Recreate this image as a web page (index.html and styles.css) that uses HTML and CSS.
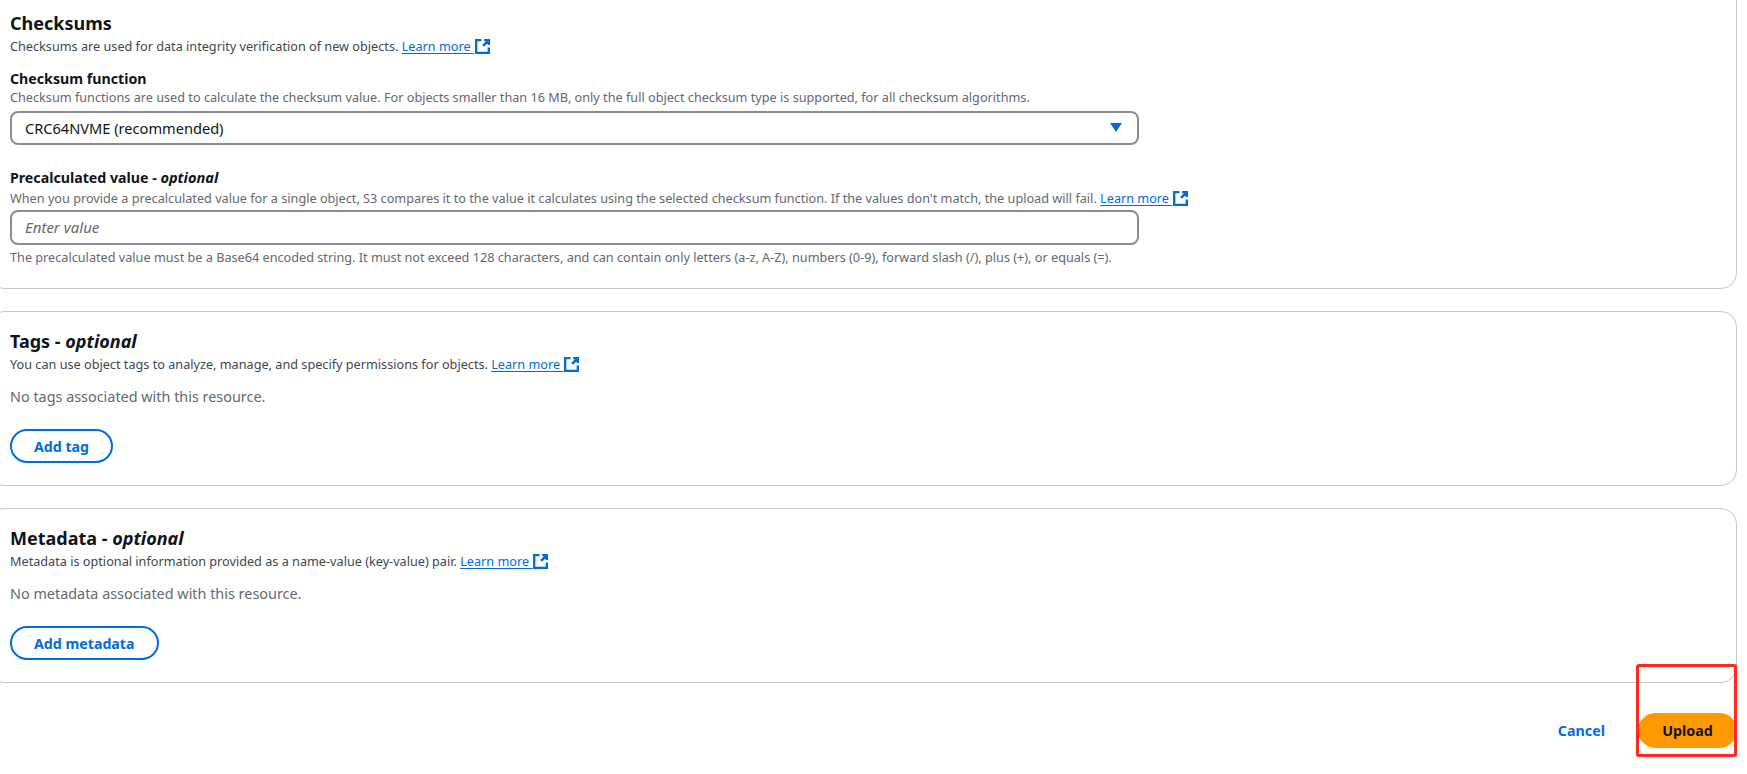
FILE: index.html
```html
<!DOCTYPE html>
<html lang="en">
<head>
<meta charset="utf-8">
<title>Upload</title>
<link rel="stylesheet" href="styles.css">
</head>
<body>
<main class="page">
  <section class="card card-first">
    <h2 class="title">Checksums</h2>
    <p class="desc">Checksums are used for data integrity verification of new objects. <a class="link" href="#">Learn more </a><svg class="ext" viewBox="0 0 14 14"><path d="M6 1H1v12h12V8M8.500 1H13v4.500M12.500 1.500 7.500 6.500"/></svg></p>
    <div class="field field-function">
      <div class="label">Checksum function</div>
      <p class="desc">Checksum functions are used to calculate the checksum value. For objects smaller than 16 MB, only the full object checksum type is supported, for all checksum algorithms.</p>
      <div class="control select">
        <span>CRC64NVME (recommended)</span>
        <svg class="caret" viewBox="0 0 12 9"><path d="M0 0h12L6 9z"/></svg>
      </div>
    </div>
    <div class="field field-value">
      <div class="label">Precalculated value - <em>optional</em></div>
      <p class="desc desc-gap">When you provide a precalculated value for a single object, S3 compares it to the value it calculates using the selected checksum function. If the values don't match, the upload will fail. <a class="link" href="#">Learn more </a><svg class="ext" viewBox="0 0 14 14"><path d="M6 1H1v12h12V8M8.500 1H13v4.500M12.500 1.500 7.500 6.500"/></svg></p>
      <div class="control input">Enter value</div>
      <p class="desc hint">The precalculated value must be a Base64 encoded string. It must not exceed 128 characters, and can contain only letters (a-z, A-Z), numbers (0-9), forward slash (/), plus (+), or equals (=).</p>
    </div>
  </section>
  <section class="card">
    <h2 class="title">Tags - <em>optional</em></h2>
    <p class="desc">You can use object tags to analyze, manage, and specify permissions for objects. <a class="link" href="#">Learn more </a><svg class="ext" viewBox="0 0 14 14"><path d="M6 1H1v12h12V8M8.500 1H13v4.500M12.500 1.500 7.500 6.500"/></svg></p>
    <p class="empty">No tags associated with this resource.</p>
    <button class="btn">Add tag</button>
  </section>
  <section class="card">
    <h2 class="title">Metadata - <em>optional</em></h2>
    <p class="desc">Metadata is optional information provided as a name-value (key-value) pair. <a class="link" href="#">Learn more </a><svg class="ext" viewBox="0 0 14 14"><path d="M6 1H1v12h12V8M8.500 1H13v4.500M12.500 1.500 7.500 6.500"/></svg></p>
    <p class="empty">No metadata associated with this resource.</p>
    <button class="btn">Add metadata</button>
  </section>
  <footer class="actions">
    <button class="cancel">Cancel</button>
    <button class="upload">Upload</button>
  </footer>
</main>
<div class="annotation"></div>
</body>
</html>
```
FILE: styles.css
```css
* { box-sizing: border-box; }
html, body { margin: 0; height: 774px; overflow: hidden; background: #fff; }
body { position: relative; font-family: "Noto Sans", "Open Sans", sans-serif; color: #0f141a; }
.page { width: 1737px; display: flex; flex-direction: column; gap: 22px; }
.card {
  margin-left: -12px;
  height: 175px;
  padding: 17px 0 0 21px;
  border: 1px solid #c6c6cd;
  border-radius: 16px;
}
.card-first { margin-top: -20px; height: 309px; padding-top: 30px; }
.title { margin: 0; font-size: 18px; line-height: 24px; font-weight: 700; }
.title em { font-weight: 700; }
.desc { margin: 0; font-size: 12.680px; line-height: 16px; color: #424650; white-space: nowrap; }
.field .desc { color: #656871; }
.title + .desc { margin-top: 3px; }
.desc-gap { margin-top: 2px; }
.link { color: #006ce0; text-decoration: underline; text-underline-offset: 2px; }
.ext { width: 15px; height: 15px; margin-left: 1px; vertical-align: -3px; fill: none; stroke: #006ce0; stroke-width: 2.400; }
.field-function { margin-top: 15px; }
.field-value { margin-top: 22px; }
.label { font-size: 14.200px; line-height: 20px; font-weight: 700; }
.label em { font-weight: 700; font-size: 14.600px; }
.control {
  width: 1129px;
  height: 34px;
  margin-top: 6px;
  padding: 0 13px 1px;
  display: flex;
  align-items: center;
  justify-content: space-between;
  border: 2px solid #8c8c94;
  border-radius: 8px;
  font-size: 14.600px;
}
.input { height: 35px; margin-top: 4px; padding-bottom: 2px; color: #656871; font-style: italic; font-size: 15px; }
.hint { margin-top: 4px; }
.caret { width: 12px; height: 9px; margin-right: 2px; fill: #006ce0; }
.empty { margin: 15px 0 0; font-size: 14.400px; line-height: 20px; color: #656871; }
.btn {
  display: block;
  height: 34px;
  margin-top: 22px;
  padding: 0 22px;
  border: 2px solid #006ce0;
  border-radius: 20px;
  background: #fff;
  color: #006ce0;
  font: 700 14.200px "Noto Sans", "Open Sans", sans-serif;
}
.actions { margin-top: 8px; display: flex; justify-content: flex-end; align-items: center; gap: 33px; }
.cancel, .upload { border: 0; font: 700 14.300px "Noto Sans", "Open Sans", sans-serif; }
.cancel { padding: 0; background: none; color: #006ce0; }
.upload { width: 99px; height: 35px; border-radius: 20px; background: #ff9900; color: #0f141a; }
.annotation {
  position: absolute;
  left: 1636px;
  top: 664px;
  width: 101px;
  height: 93px;
  border: 3px solid #ff2a20;
  border-radius: 3px;
}
```
